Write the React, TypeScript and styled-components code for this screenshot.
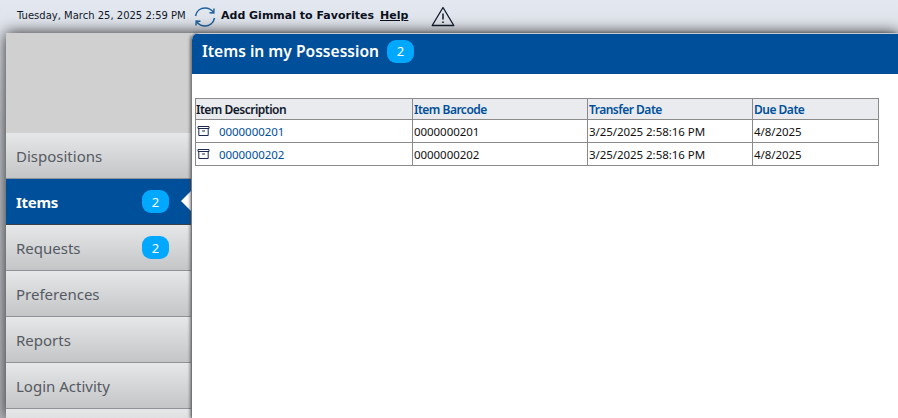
import React from "react";
import styled, { createGlobalStyle } from "styled-components";

const Global = createGlobalStyle`
  html, body { margin: 0; padding: 0; height: 100%; overflow: hidden; background: #fff; }
  #root { height: 100%; }
`;

const Page = styled.div`
  width: 898px;
  height: 418px;
  display: flex;
  flex-direction: column;
  overflow: hidden;
  font-family: "Noto Sans", "Open Sans", sans-serif;
  background: linear-gradient(to bottom, #e3e8f0 0, #dfe3ea 33px, #c8ccd3 120px, #b8bbc0 418px);
`;

const TopBar = styled.header`
  height: 33px;
  flex: none;
  display: flex;
  align-items: center;
  padding-left: 17px;
  box-sizing: border-box;
  font-family: "DejaVu Sans", Verdana, sans-serif;
  color: #10182a;
`;

const DateText = styled.span`
  font-size: 10px;
  width: 177px;
  flex: none;
  white-space: nowrap;
  position: relative;
  top: -1px;
`;

const Favorite = styled.span`
  font-size: 11px;
  font-weight: 700;
  margin-left: 5px;
  width: 159px;
  flex: none;
  white-space: nowrap;
  color: #0b1020;
  position: relative;
  top: -1px;
`;

const Help = styled.a`
  font-size: 11px;
  font-weight: 700;
  text-decoration: underline;
  color: #0b1020;
  width: 51px;
  flex: none;
  position: relative;
  top: -1px;
`;

const Body = styled.div`
  flex: 1;
  display: flex;
  margin-left: 6px;
  min-height: 0;
  box-shadow: 0 0 14px rgba(30, 30, 30, 0.95);
`;

const Side = styled.nav`
  width: 185px;
  flex: none;
  display: flex;
  flex-direction: column;
  background: #d0d0d0;
`;

const Blank = styled.div`
  height: 100px;
  flex: none;
  background: #d0d0d0;
`;

const NavItem = styled.div<{ $active?: boolean }>`
  height: 46px;
  flex: none;
  box-sizing: border-box;
  display: flex;
  align-items: center;
  justify-content: space-between;
  padding: 0 22px 0 10px;
  position: relative;
  font-size: 15px;
  letter-spacing: ${(p) => (p.$active ? "-0.3px" : "0")};
  font-weight: ${(p) => (p.$active ? 700 : 400)};
  color: ${(p) => (p.$active ? "#fff" : "#555a62")};
  background: ${(p) =>
    p.$active ? "#004f9a" : "linear-gradient(to bottom, #e6e7e9 0, #c4c5c7 100%)"};
  border-bottom: 1px solid ${(p) => (p.$active ? "#3b4148" : "#8f9296")};
`;

const Pointer = styled.span`
  position: absolute;
  right: 0;
  top: 12px;
  width: 0;
  height: 0;
  border-top: 10px solid transparent;
  border-bottom: 10px solid transparent;
  border-right: 10px solid #fff;
`;

const Badge = styled.span`
  width: 27px;
  height: 23px;
  flex: none;
  border-radius: 9px;
  background: #00a8ff;
  color: #fff;
  font-size: 13px;
  font-weight: 400;
  letter-spacing: 0;
  display: flex;
  align-items: center;
  justify-content: center;
`;

const Main = styled.main`
  flex: 1;
  min-width: 0;
  background: #fff;
  margin-left: 1px;
  border-top-left-radius: 7px;
  box-shadow: -2px 0 3px rgba(60, 60, 60, 0.65);
  overflow: hidden;
  display: flex;
  flex-direction: column;
  position: relative;
`;

const TitleBar = styled.div`
  height: 41px;
  flex: none;
  box-sizing: border-box;
  padding: 0 0 6px 10px;
  display: flex;
  align-items: center;
  gap: 8px;
  background: #004f9a;
  color: #fff;
  border-top: 1px solid #c9cdd3;
  font-size: 15.6px;
  font-weight: 600;
`;

const Content = styled.div`
  padding: 24px 0 0 3px;
`;

const Table = styled.table`
  border-collapse: collapse;
  table-layout: fixed;
  width: 683px;
  font-size: 11.5px;
  letter-spacing: -0.05px;
  color: #111;
  border: 1px solid #8a8a8a;
`;

const Th = styled.th<{ $dark?: boolean; $w: number }>`
  width: ${(p) => p.$w}px;
  box-sizing: border-box;
  height: 21px;
  padding: 0 1px;
  text-align: left;
  font-weight: 600;
  font-size: 12px;
  letter-spacing: -0.5px;
  background: #e9ebee;
  color: ${(p) => (p.$dark ? "#10182a" : "#004f9a")};
  border: 1px solid #8a8a8a;
  &:first-child {
    padding-left: 0;
  }
`;

const Td = styled.td`
  height: 23px;
  box-sizing: border-box;
  padding: 0 1px;
  border: 1px solid #8a8a8a;
  white-space: nowrap;
`;

const ItemCell = styled.span`
  display: flex;
  align-items: center;
  gap: 9px;
`;

const Link = styled.a`
  color: #004f9a;
`;

const IconSvg = styled.svg`
  flex: none;
`;

const Sync = () => (
  <IconSvg width="22" height="22" viewBox="0 0 22 22" fill="none" stroke="#1f639f" strokeWidth="1.5">
    <path d="M1.5 10 C2.5 5 6.5 2 11 2 C14.5 2 17.5 3.6 19.5 6.5" />
    <path d="M20 2.5 L19.8 7 L15.5 6.8" />
    <path d="M20.5 12 C19.5 17 15.5 20 11 20 C7.5 20 4.5 18.4 2.5 15.5" />
    <path d="M2 19.5 L2.2 15 L6.5 15.2" />
  </IconSvg>
);

const Warn = () => (
  <IconSvg width="24" height="21" viewBox="0 0 24 21" fill="none" stroke="#10182a" strokeWidth="1.3">
    <path d="M12 1.5 L22.8 19.5 H1.2 Z" strokeLinejoin="round" />
    <path d="M12 7.5 V13.5" strokeWidth="1.5" />
    <path d="M12 15.5 V17" strokeWidth="1.6" />
  </IconSvg>
);

const Archive = () => (
  <IconSvg width="13" height="12" viewBox="0 0 13 12" fill="none" stroke="#1c2a50" strokeWidth="1">
    <path d="M1 1.5 H12 V3.5 H1 Z" />
    <path d="M1.8 3.5 V10.5 H11.2 V3.5" />
    <path d="M5 6 H8" />
  </IconSvg>
);

const rows = ["0000000201", "0000000202"];
const nav = [
  { label: "Dispositions" },
  { label: "Items", badge: 2, active: true },
  { label: "Requests", badge: 2 },
  { label: "Preferences" },
  { label: "Reports" },
  { label: "Login Activity" },
  { label: "" },
];

export default function App() {
  return (
    <Page>
      <Global />
      <TopBar>
        <DateText>Tuesday, March 25, 2025 2:59 PM</DateText>
        <Sync />
        <Favorite>Add Gimmal to Favorites</Favorite>
        <Help>Help</Help>
        <Warn />
      </TopBar>
      <Body>
        <Side>
          <Blank />
          {nav.map((n) => (
            <NavItem key={n.label} $active={n.active}>
              <span>{n.label}</span>
              {n.badge ? <Badge>{n.badge}</Badge> : null}
              {n.active ? <Pointer /> : null}
            </NavItem>
          ))}
        </Side>
        <Main>
          <TitleBar>
            Items in my Possession
            <Badge>2</Badge>
          </TitleBar>
          <Content>
            <Table>
              <thead>
                <tr>
                  <Th $dark $w={217}>Item Description</Th>
                  <Th $w={175}>Item Barcode</Th>
                  <Th $w={165}>Transfer Date</Th>
                  <Th $w={126}>Due Date</Th>
                </tr>
              </thead>
              <tbody>
                {rows.map((r) => (
                  <tr key={r}>
                    <Td>
                      <ItemCell>
                        <Archive />
                        <Link>{r}</Link>
                      </ItemCell>
                    </Td>
                    <Td>{r}</Td>
                    <Td>3/25/2025 2:58:16 PM</Td>
                    <Td>4/8/2025</Td>
                  </tr>
                ))}
              </tbody>
            </Table>
          </Content>
        </Main>
      </Body>
    </Page>
  );
}
